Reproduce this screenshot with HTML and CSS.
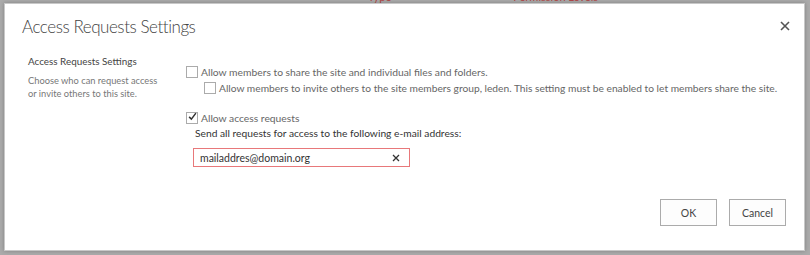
FILE: index.html
```html
<!DOCTYPE html>
<html lang="en">
<head>
    <meta charset="UTF-8">
    <title>Access Requests Settings</title>
    <link rel="stylesheet" href="styles.css">
</head>
<body>
    <div class="backdrop">
        <span class="backdrop-col type">Type</span>
        <span class="backdrop-col">Permission Levels</span>
    </div>

    <div class="dialog">
        <div class="dialog-head">
            <h1 class="dialog-title">Access Requests Settings</h1>
            <button class="close-btn" aria-label="Close">
                <svg width="10" height="10" viewBox="0 0 10 10" fill="none" stroke="currentColor" stroke-width="1.6">
                    <path d="M1 1L9 9M9 1L1 9"></path>
                </svg>
            </button>
        </div>

        <div class="dialog-body">
            <div class="section-info">
                <h2 class="section-title">Access Requests Settings</h2>
                <p class="section-desc">Choose who can request access<br>or invite others to this site.</p>
            </div>

            <div class="section-fields">
                <label class="check">
                    <span class="box"></span>
                    Allow members to share the site and individual files and folders.
                </label>
                <label class="check sub">
                    <span class="box"></span>
                    Allow members to invite others to the site members group, leden. This setting must be enabled to let members share the site.
                </label>
                <label class="check checked">
                    <span class="box">
                        <svg width="12" height="11" viewBox="0 0 12 11" fill="none" stroke="currentColor" stroke-width="2">
                            <path d="M1.5 6L4.5 9L10.5 1"></path>
                        </svg>
                    </span>
                    Allow access requests
                </label>
                <p class="send-label">Send all requests for access to the following e-mail address:</p>
                <div class="email-input">
                    <span>mailaddres@domain.org</span>
                    <svg width="8" height="8" viewBox="0 0 8 8" fill="none" stroke="currentColor" stroke-width="1.3">
                        <path d="M1 1L7 7M7 1L1 7"></path>
                    </svg>
                </div>
            </div>
        </div>

        <div class="dialog-foot">
            <button class="btn">OK</button>
            <button class="btn">Cancel</button>
        </div>
    </div>
</body>
</html>
```

FILE: styles.css
```css
:root {
    --color-overlay: #ababab;
    --color-dialog: #ffffff;
    --color-title: #444444;
    --color-text: #444444;
    --color-text-muted: #777777;
    --color-text-label: #666666;
    --color-border: #ababab;
    --color-error: #e8787a;
    --color-link: #b04848;
}

* {
    margin: 0;
    padding: 0;
    box-sizing: border-box;
}

body {
    font-family: Lato, 'Open Sans', sans-serif;
    background-color: var(--color-overlay);
    width: 810px;
    height: 255px;
    overflow: hidden;
    position: relative;
}

.backdrop {
    height: 3px;
    overflow: hidden;
    display: flex;
    align-items: flex-end;
    padding-left: 368px;
    gap: 122px;
}

.backdrop-col {
    color: var(--color-link);
    font-size: 11px;
    line-height: 11px;
    flex: none;
    transform: translateY(-1px);
}

.dialog {
    position: absolute;
    left: 4px;
    top: 3px;
    width: 801px;
    height: 248px;
    background-color: var(--color-dialog);
    border: 1px solid #c8c8c8;
    box-shadow: 0 0 4px rgba(0, 0, 0, 0.25);
    display: flex;
    flex-direction: column;
}

.dialog-head {
    display: flex;
    align-items: flex-start;
    justify-content: space-between;
    padding: 11px 14px 0 17px;
}

.dialog-title {
    font-family: Lato, 'Open Sans', sans-serif;
    font-weight: 300;
    font-size: 17px;
    line-height: 24px;
    color: var(--color-title);
    letter-spacing: -0.45px;
}

.close-btn {
    background: none;
    border: none;
    color: #555555;
    margin-top: 6px;
    width: 10px;
    height: 10px;
    display: flex;
    cursor: pointer;
}

.dialog-body {
    display: flex;
    padding: 15px 0 0 23px;
}

.section-info {
    width: 158px;
    flex: none;
}

.section-title {
    font-size: 9.9px;
    font-weight: normal;
    line-height: 14px;
    color: var(--color-text);
}

.section-desc {
    margin-top: 6px;
    font-size: 9.3px;
    line-height: 13px;
    color: var(--color-text-muted);
}

.section-fields {
    padding-top: 10px;
    display: flex;
    flex-direction: column;
}

.check {
    display: flex;
    align-items: center;
    gap: 3px;
    font-size: 10.3px;
    line-height: 16px;
    color: var(--color-text-label);
}

.check.sub {
    margin-left: 18px;
    font-size: 10.22px;
}

.check.checked {
    margin-top: 14px;
}

.box {
    width: 12px;
    height: 12px;
    border: 1px solid var(--color-border);
    display: flex;
    align-items: center;
    justify-content: center;
    color: #333333;
    flex: none;
}

.box svg {
    margin-top: -3px;
    margin-left: 1px;
}

.send-label {
    margin-left: 9px;
    font-size: 10.25px;
    line-height: 15px;
    color: #333333;
}

.email-input {
    margin-top: 7px;
    margin-left: 7px;
    width: 217px;
    height: 19px;
    border: 1px solid var(--color-error);
    display: flex;
    align-items: center;
    justify-content: space-between;
    padding: 0 9px 0 6px;
    font-size: 10.5px;
    color: #333333;
}

.dialog-foot {
    margin-top: auto;
    display: flex;
    justify-content: flex-end;
    gap: 12px;
    padding: 0 18px 24px 0;
}

.btn {
    width: 57px;
    height: 27px;
    background-color: #fdfdfd;
    border: 1px solid var(--color-border);
    font-family: Lato, 'Open Sans', sans-serif;
    font-size: 10.5px;
    color: var(--color-text);
}
```
